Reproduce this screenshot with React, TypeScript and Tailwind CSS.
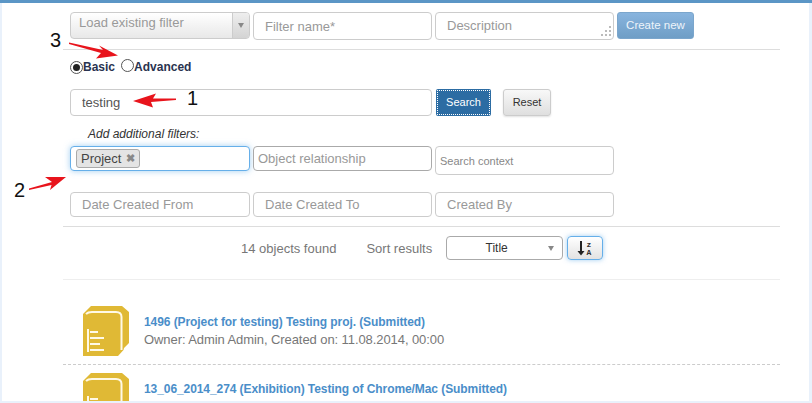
const fieldBox = 'h-full rounded-[4px] border border-[#ccc] bg-white text-[13px] text-[#555] placeholder:text-[#999] outline-none'

function TextField({ placeholder, value, className }: { placeholder: string; value?: string; className: string }) {
  return <input readOnly placeholder={placeholder} defaultValue={value} className={`${fieldBox} px-[11px] ${className}`} />
}

function BookIcon() {
  return (
    <svg width="47" height="51" viewBox="0 0 47 51" className="shrink-0">
      <path d="M0 8 L8 0 H39 L46 6 V37 L41 42 L40.5 44 L35 50 H0 Z" fill="#e0b935" />
      <path d="M3 8 Q5 6 9 6 H33 Q38.5 6 38.5 11 V44" fill="none" stroke="#fff9e6" strokeWidth="2" />
      <g fill="#fff9e6">
        <rect x="4" y="23" width="2" height="23" />
        <rect x="7" y="25" width="8" height="2" />
        <rect x="7" y="31" width="14" height="2" />
        <rect x="7" y="37" width="10" height="2" />
        <rect x="7" y="43" width="14" height="2" />
      </g>
    </svg>
  )
}

function SortIcon() {
  return (
    <svg width="16" height="17" viewBox="0 0 16 17">
      <path d="M4 1 V13" stroke="#222" strokeWidth="2" />
      <path d="M0.5 11 H7.5 L4 15.5 Z" fill="#222" />
      <text x="9.5" y="6.5" fontSize="8" fontWeight="700" fontFamily="Liberation Mono, monospace" fill="#333">z</text>
      <text x="9.5" y="15" fontSize="8" fontWeight="700" fontFamily="Liberation Mono, monospace" fill="#333">A</text>
    </svg>
  )
}

function ResultItem({ title, meta }: { title: string; meta?: string }) {
  return (
    <div className="flex h-[52px] items-start gap-[14px] pl-[20px]">
      <BookIcon />
      <div className="pt-[8px]">
        <div className="text-[12px] leading-[17px] font-bold tracking-[-0.08px] whitespace-nowrap text-[#4a8ec9]">{title}</div>
        {meta && <div className="text-[13px] leading-[18px] tracking-[-0.08px] whitespace-nowrap text-[#777]">{meta}</div>}
      </div>
    </div>
  )
}

function Radio({ checked, label, lifted }: { checked?: boolean; label: string; lifted?: boolean }) {
  return (
    <label className="flex items-center">
      <span className={`flex h-[13px] w-[13px] items-center justify-center rounded-full border border-[#555] bg-white ${lifted ? 'mb-[3px]' : ''}`}>
        {checked && <span className="h-[7px] w-[7px] rounded-full bg-[#222]" />}
      </span>
      <span className="text-[12px] font-bold text-[#2a3350]">{label}</span>
    </label>
  )
}

export default function App() {
  return (
    <div className="relative flex h-[403px] w-[812px] flex-col overflow-hidden bg-[#e9f1fb] font-['Liberation_Sans',Arial,sans-serif]">
      <div className="h-[3px] shrink-0 bg-[#5b96c6]" />
      <div className="mr-[3px] mb-[2px] ml-[2px] min-h-0 flex-1 overflow-hidden bg-white pl-[61px]">
        <div className="w-[717px]">
          <div className="flex h-[46px] items-start gap-[3px] pt-[9px] pl-[7px]">
            <div className="flex h-[27px] w-[180px] overflow-hidden rounded-[4px] border border-[#ccc] bg-gradient-to-b from-white to-[#e8e8e8]">
              <span className="flex-1 pl-[8px] text-[13px] leading-[20px] text-[#999]">Load existing filter</span>
              <span className="flex w-[17px] items-center justify-center border-l border-[#ccc] bg-gradient-to-b from-[#eee] to-[#d4d4d4]">
                <span className="h-0 w-0 border-x-[3.5px] border-t-[5px] border-x-transparent border-t-[#888]" />
              </span>
            </div>
            <TextField placeholder="Filter name*" className="!h-[28px] w-[179px]" />
            <div className="relative h-[28px] w-[179px] rounded-[4px] border border-[#ccc] bg-white pl-[11px] text-[13px] leading-[26px] text-[#999]">
              Description
              <svg width="14" height="14" viewBox="0 0 14 14" className="absolute right-[0px] bottom-[0px]" fill="#bbb">
                <rect x="10" y="1" width="2" height="2" />
                <rect x="6" y="5" width="2" height="2" />
                <rect x="10" y="5" width="2" height="2" />
                <rect x="2" y="9" width="2" height="2" />
                <rect x="6" y="9" width="2" height="2" />
                <rect x="10" y="9" width="2" height="2" />
              </svg>
            </div>
            <button className="h-[27px] w-[77px] rounded-[3px] border border-[#7ba6cc] bg-gradient-to-b from-[#88b4de] to-[#6f9ec6] text-[11.5px] text-[#eef4fa]">
              Create new
            </button>
          </div>
          <div className="border-t border-[#ddd]" />

          <div className="flex h-[39px] items-start gap-[6px] pt-[8px] pl-[7px]">
            <Radio checked label="Basic" />
            <Radio lifted label="Advanced" />
          </div>

          <div className="flex h-[27px] items-start pl-[7px]">
            <TextField placeholder="" value="testing" className="!h-[27px] w-[362px]" />
            <button className="relative ml-[4px] h-[27px] w-[55px] rounded-[2px] bg-[#2c6ca3] text-[11px] text-white">
              Search
              <span className="absolute inset-[1px] rounded-[1px] border border-dotted border-white" />
            </button>
            <button className="ml-[12px] h-[27px] w-[48px] rounded-[3px] border border-[#ccc] bg-gradient-to-b from-[#f8f8f8] to-[#dfdfdf] text-[11px] text-[#333] shadow-[0_1px_2px_rgba(0,0,0,0.12)]">
              Reset
            </button>
          </div>

          <div className="h-[30px] pt-[11px] pl-[25px] text-[12px] leading-[14px] text-[#333] italic">Add additional filters:</div>

          <div className="flex h-[46px] items-start pl-[7px]">
            <div className="flex h-[25px] w-[180px] items-center rounded-[4px] border border-[#66afe9] bg-white pl-[5px] shadow-[0_0_6px_rgba(102,175,233,0.6)]">
              <span className="flex h-[19px] items-center gap-[5px] rounded-[3px] border border-[#aaa] bg-[#e4e4e4] px-[4px] text-[13px] text-[#444]">
                Project
                <span className="text-[11px] leading-none font-bold text-[#888]">✖</span>
              </span>
            </div>
            <input
              readOnly
              placeholder="Object relationship"
              className="ml-[3px] h-[25px] w-[179px] rounded-[4px] border border-[#aaa] bg-white px-[4px] text-[13px] outline-none placeholder:text-[#999]"
            />
            <input
              readOnly
              placeholder="Search context"
              className="ml-[3px] h-[29px] w-[179px] rounded-[4px] border border-[#ccc] bg-white px-[4px] text-[11px] outline-none placeholder:text-[#888]"
            />
          </div>

          <div className="flex h-[34px] items-start gap-[3px] pl-[7px]">
            <TextField placeholder="Date Created From" className="!h-[25px] w-[180px]" />
            <TextField placeholder="Date Created To" className="!h-[25px] w-[179px]" />
            <TextField placeholder="Created By" className="!h-[25px] w-[179px]" />
          </div>
          <div className="border-t border-[#ddd]" />

          <div className="flex h-[52px] items-start pt-[9px] pl-[178px]">
            <span className="pt-[3px] text-[13px] text-[#777]">14 objects found</span>
            <span className="ml-[30px] pt-[3px] text-[13px] text-[#777]">Sort results</span>
            <div className="relative ml-[14px] flex h-[24px] w-[117px] items-center justify-center rounded-[4px] border border-[#aaa] bg-white pr-[16px] text-[12px] text-[#333]">
              Title
              <span className="absolute right-[8px] h-0 w-0 border-x-[3.5px] border-t-[5px] border-x-transparent border-t-[#888]" />
            </div>
            <button className="ml-[4px] flex h-[24px] w-[36px] items-center justify-center rounded-[4px] border border-[#66afe9] bg-gradient-to-b from-white to-[#e2e2e2] shadow-[0_0_5px_rgba(102,175,233,0.6)]">
              <SortIcon />
            </button>
          </div>
          <div className="border-t border-[#eee]" />

          <div className="pt-[26px]">
            <ResultItem title="1496 (Project for testing) Testing proj. (Submitted)" meta="Owner: Admin Admin, Created on: 11.08.2014, 00:00" />
            <div className="mt-[6px] mb-[8px] border-t border-dashed border-[#ccc]" />
            <ResultItem title="13_06_2014_274 (Exhibition) Testing of Chrome/Mac (Submitted)" />
          </div>
        </div>
      </div>

      {/* callouts drawn over the form */}
      <svg width="812" height="403" className="pointer-events-none absolute top-0 left-0">
        <g fill="#e8141c">
          <path d="M69 42.5 L103 50 L99 45.5 L118 55.5 L96 58.5 L101 53 L69 44 Z" />
          <path d="M176 98.5 L153 98.5 L156 93.5 L133 101 L153 107.5 L151 102 L176 100 Z" />
          <path d="M29 188.5 L52 182 L45 177 L66 177 L50 190 L51.5 185 L29 190 Z" />
        </g>
      </svg>
      <span className="absolute top-[29px] left-[50px] text-[20px] leading-[22px] text-[#111]">3</span>
      <span className="absolute top-[87px] left-[187px] text-[20px] leading-[22px] text-[#111]">1</span>
      <span className="absolute top-[179px] left-[14px] text-[20px] leading-[22px] text-[#111]">2</span>
    </div>
  )
}
